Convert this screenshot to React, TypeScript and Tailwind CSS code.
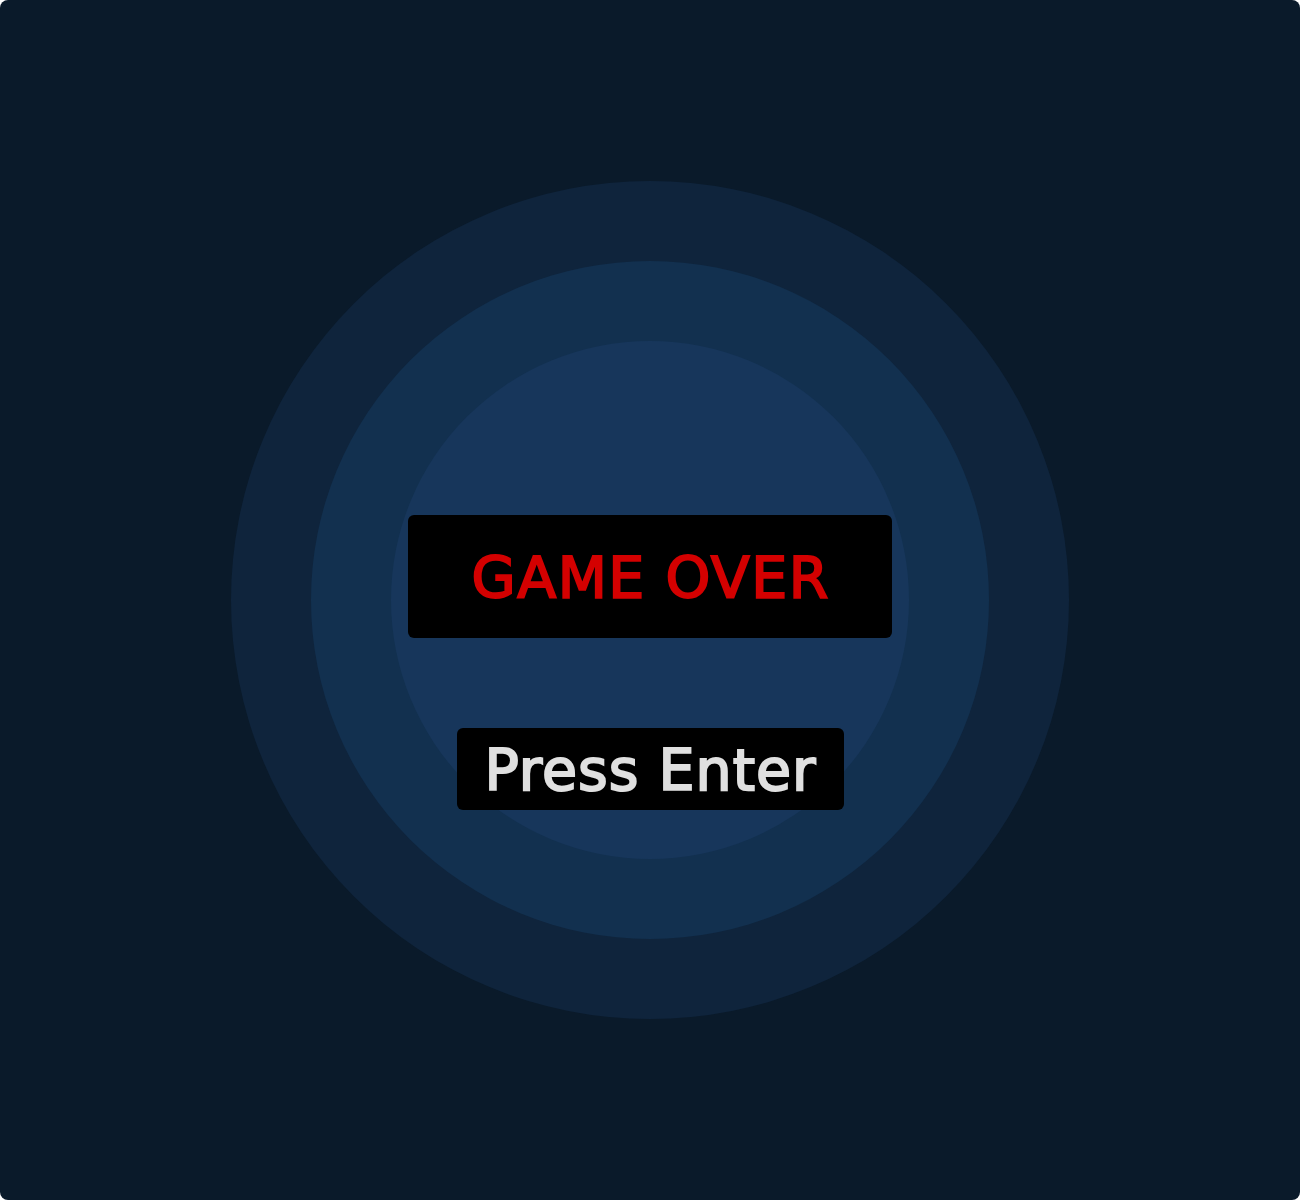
import React from "react";

export default function App() {
  return (
    <div className="w-[1300px] h-[1200px] bg-white">
      <div className="w-full h-full rounded-lg bg-[#0a1a2a] flex items-center justify-center">
        <div className="w-[838px] h-[838px] rounded-full bg-[#0f243c] flex items-center justify-center">
          <div className="w-[678px] h-[678px] rounded-full bg-[#12304f] flex items-center justify-center">
            <div className="w-[518px] h-[518px] rounded-full bg-[#17365b] flex flex-col items-center pt-[174px]">
              <div className="w-[484px] h-[123px] rounded-md bg-black flex items-center justify-center pt-[4px]">
                <span
                  className="text-[57px] leading-none tracking-[1.5px] mr-[-1.5px] text-[#d40000] [-webkit-text-stroke:2px_#d40000] [paint-order:stroke]"
                  style={{ fontFamily: '"DejaVu Sans", Verdana, sans-serif' }}
                >
                  GAME OVER
                </span>
              </div>
              <div className="mt-[90px] w-[387px] h-[82px] rounded-md bg-black flex items-center justify-center pt-[2px]">
                <span
                  className="text-[57px] leading-none tracking-[1px] mr-[-1px] text-[#e0e0e0] [-webkit-text-stroke:2px_#e0e0e0] [paint-order:stroke]"
                  style={{ fontFamily: '"DejaVu Sans", Verdana, sans-serif' }}
                >
                  Press Enter
                </span>
              </div>
            </div>
          </div>
        </div>
      </div>
    </div>
  );
}
